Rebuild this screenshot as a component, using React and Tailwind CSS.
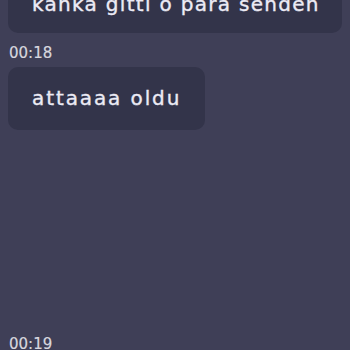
export default function App() {
  return (
    <div className="w-[350px] h-[350px] overflow-hidden bg-[#3f3f57] px-2" style={{ fontFamily: '"DejaVu Sans", sans-serif' }}>
      <div className="mt-[-29px] flex flex-col items-start">
        <div className="w-full rounded-[10px] bg-[#33344a] px-6 pt-[18px] pb-[14px] text-[20px] leading-[30px] tracking-[1.3px] text-[#ecebf5] whitespace-nowrap [-webkit-text-stroke:0.35px_#ecebf5]">
          kanka gitti o para senden
        </div>
        <div className="mt-[10px] pl-px text-[15px] leading-[20px] text-[#d7d7df] [-webkit-text-stroke:0.2px_#d7d7df]">00:18</div>
        <div className="mt-[4px] rounded-[10px] bg-[#33344a] px-6 py-4 text-[20px] leading-[31px] tracking-[1.9px] text-[#ecebf5] [-webkit-text-stroke:0.35px_#ecebf5]">
          attaaaa oldu
        </div>
        <div className="mt-[204px] pl-px text-[15px] leading-[20px] text-[#d7d7df] [-webkit-text-stroke:0.2px_#d7d7df]">00:19</div>
      </div>
    </div>
  );
}
